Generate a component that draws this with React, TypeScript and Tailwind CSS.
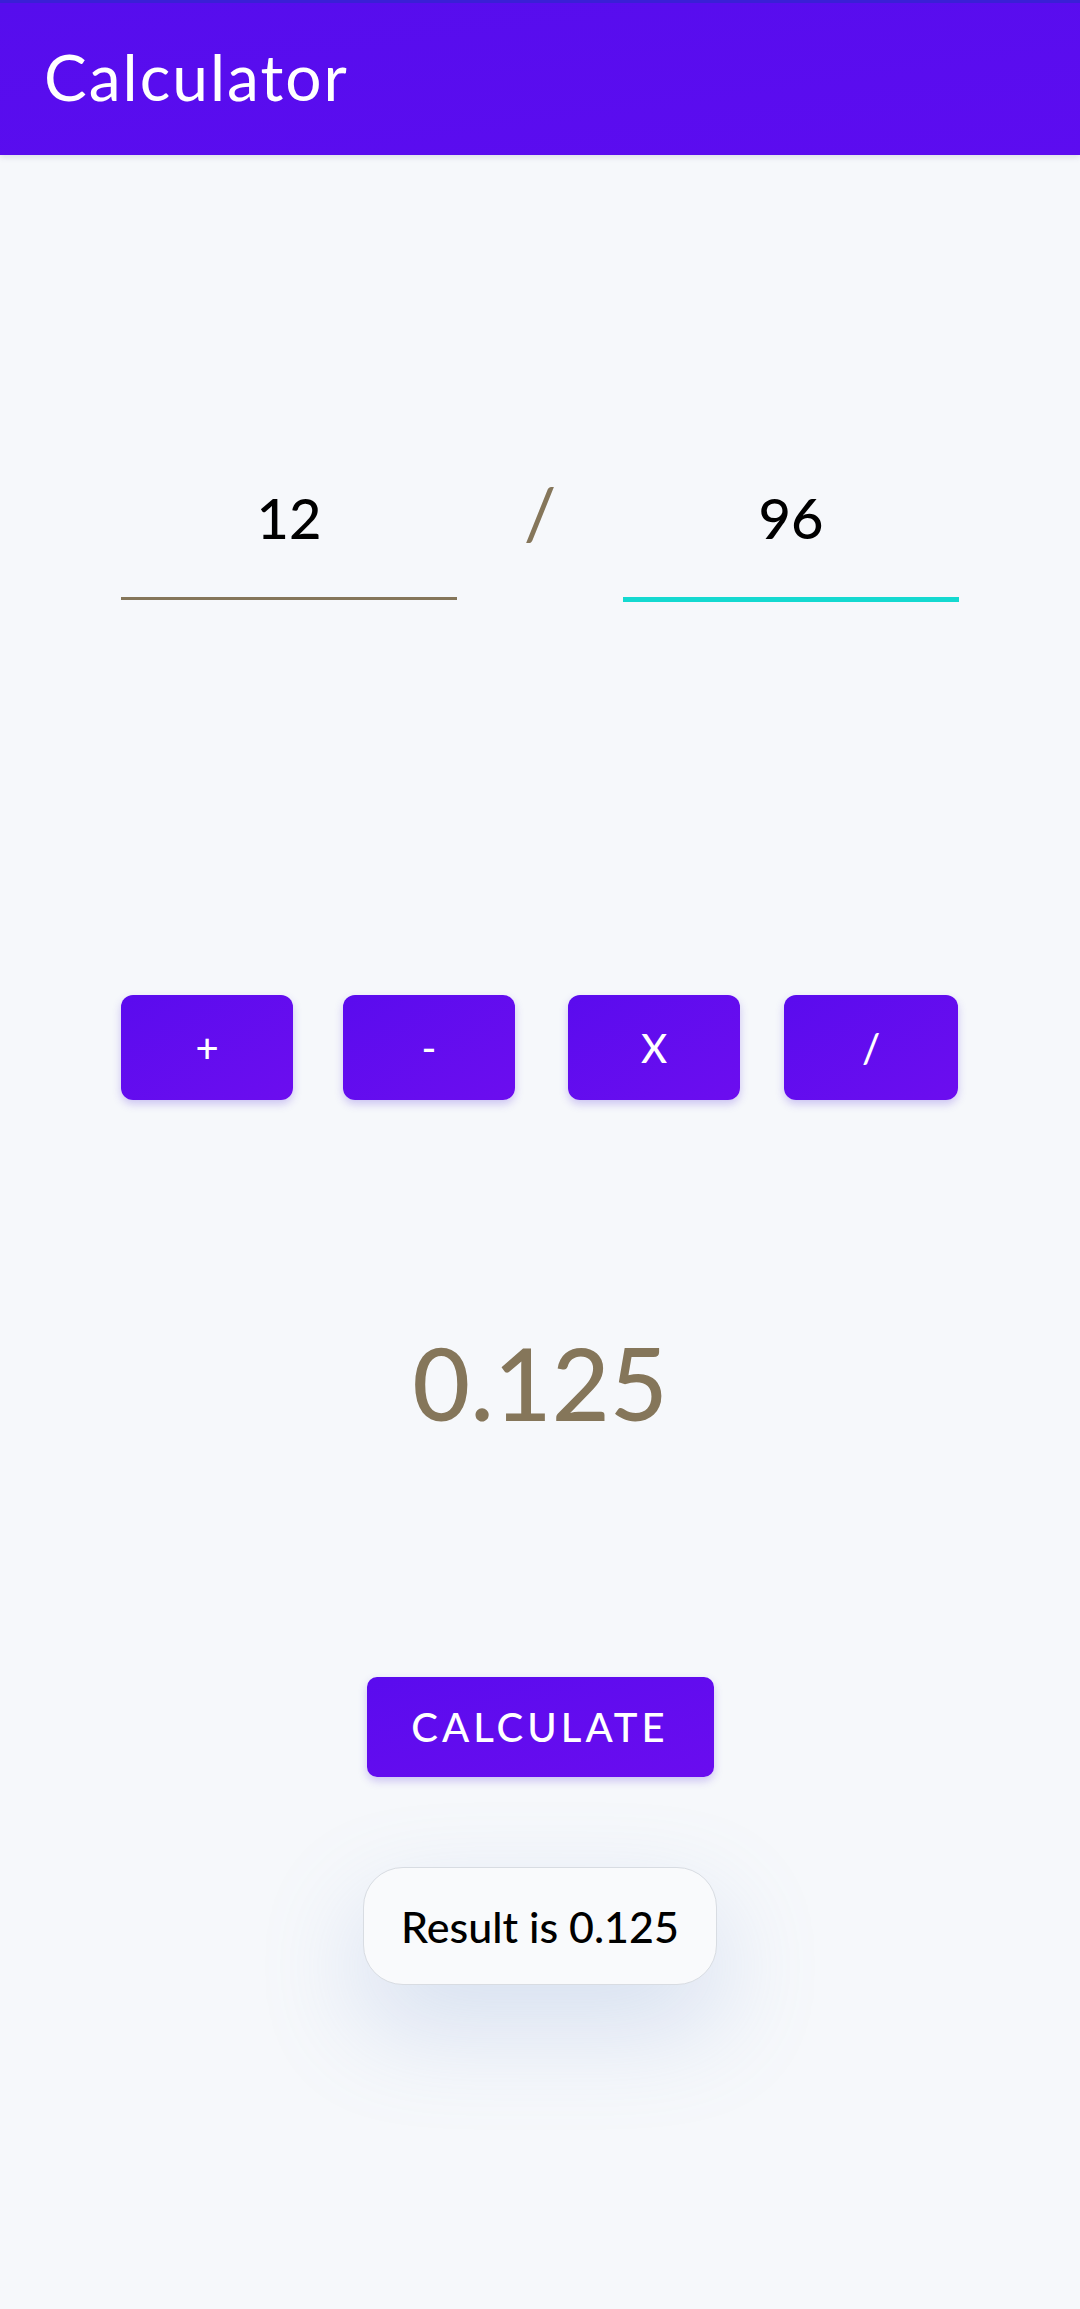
const font = { fontFamily: '"Lato", "Noto Sans", sans-serif' };

const OpButton = ({ label, className }: { label: string; className?: string }) => {
    return (
        <button className={`w-[172px] h-[105px] rounded-[12px] bg-gradient-to-br from-[#5a0bee] to-[#6c0def] text-white text-[40px] font-medium leading-none shadow-[0_4px_8px_rgba(80,40,220,0.25)] flex items-center justify-center ${className ?? ''}`}>
            {label}
        </button>
    );
};

const NumberField = ({ value, focused }: { value: string; focused?: boolean }) => {
    return (
        <div className="w-[336px] flex flex-col">
            <div className="h-[82px] flex items-center justify-center text-[56px] font-medium text-black leading-none">
                {value}
            </div>
            <div className={focused ? "mt-[38px] h-[5px] bg-[#14d9d0]" : "mt-[38px] h-[3px] bg-[#85765a]"} />
        </div>
    );
};

export default function App() {
    return (
        <div className="min-h-[2309px] bg-[#f6f8fb] flex flex-col" style={font}>
            <header className="h-[155px] border-t-[3px] border-[#3a1fd6] bg-gradient-to-br from-[#560ded] to-[#5c0cf0] shadow-[0_2px_6px_rgba(60,60,120,0.15)] flex items-center px-[44px]">
                <h1 className="text-white text-[64px] tracking-[2px] leading-none pb-[4px]">Calculator</h1>
            </header>

            <div className="px-[121px] flex flex-col">
                <div className="mt-[322px] flex flex-row justify-between items-start">
                    <NumberField value="12" />
                    <div className="h-[82px] flex items-center text-[72px] leading-none text-[#85765a] pb-[12px]">/</div>
                    <NumberField value="96" focused />
                </div>

                <div className="mt-[393px] flex flex-row">
                    <OpButton label="+" />
                    <OpButton label="-" className="ml-[50px]" />
                    <OpButton label="X" className="ml-[53px]" />
                    <OpButton label="/" className="ml-[44px] w-[174px]" />
                </div>

                <div className="mt-[222px] h-[120px] flex items-center justify-center text-[100px] font-medium leading-none text-[#85765a]">
                    0.125
                </div>

                <div className="mt-[235px] flex justify-center">
                    <button className="w-[347px] h-[100px] rounded-[10px] bg-gradient-to-br from-[#5a0bee] to-[#6a0cef] text-white text-[40px] font-medium tracking-[4px] leading-none shadow-[0_4px_8px_rgba(80,40,220,0.25)]">
                        CALCULATE
                    </button>
                </div>

                <div className="mt-[90px] flex justify-center">
                    <div className="w-[354px] h-[118px] rounded-[40px] bg-[#f9fafc] border border-[#d8dce2] shadow-[0_40px_100px_rgba(120,150,210,0.25)] flex items-center justify-center text-[43px] font-medium text-black leading-none">
                        Result is 0.125
                    </div>
                </div>
            </div>
        </div>
    );
}
